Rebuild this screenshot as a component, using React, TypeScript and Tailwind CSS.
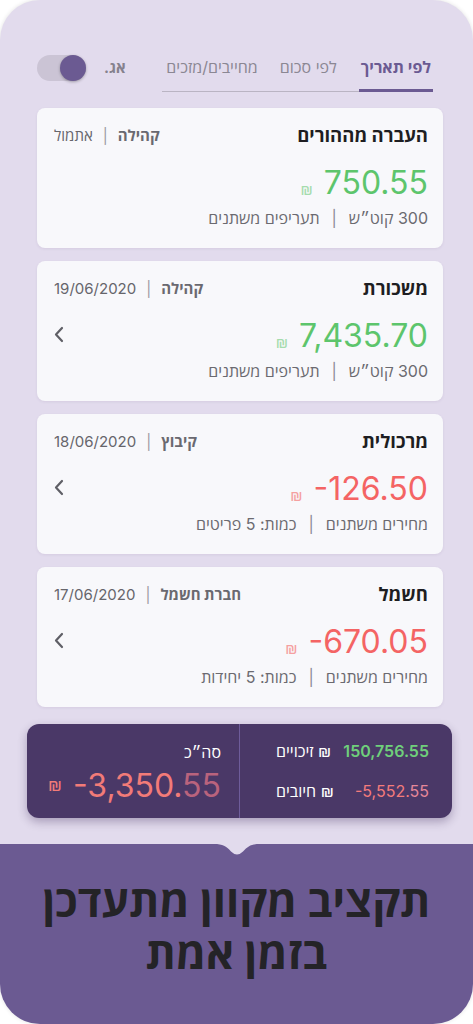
const font = { fontFamily: "Inter, 'Open Sans', 'Liberation Sans', 'DejaVu Sans', sans-serif" }

interface CardProps {
  title: string
  place: string
  when: string
  amount: string
  negative?: boolean
  note: [string, string]
  chevron?: boolean
}

function Chevron() {
  return (
    <svg width="10" height="17" viewBox="0 0 10 17" fill="none" className="mb-1">
      <path d="M8 2L2 8.5L8 15" stroke="#5f5f66" strokeWidth="2.2" strokeLinecap="round" strokeLinejoin="round" />
    </svg>
  )
}

function Card({ title, place, when, amount, negative, note, chevron }: CardProps) {
  return (
    <div className="h-[140px] rounded-lg bg-[#f8f8fb] pr-[15px] pl-[17px] pt-[17px] pb-[19px] shadow-[0_1px_3px_rgba(60,40,90,0.08)]">
      <div className="flex h-[22px] items-center justify-between">
        <div className="text-[18.5px] font-bold text-[#1e1e22]">{title}</div>
        <div className="flex items-center gap-[10px] text-[15px] text-[#66656b]">
          <span className="font-bold text-[#6a6970]">{place}</span>
          <span className="text-[#9c9aa2]">|</span>
          <span dir="ltr">{when}</span>
        </div>
      </div>
      <div className="mt-[17px] flex h-[38px] items-center justify-between">
        <div className="flex items-end gap-[11px]">
          <span dir="ltr" className={`text-[32px] leading-[38px] ${negative ? 'text-[#f46464]' : 'text-[#5dc56c]'}`}>
            {amount}
          </span>
          <span className={`mb-[5px] text-[15px] leading-none ${negative ? 'text-[#f5a0a0]' : 'text-[#a5dcad]'}`}>₪</span>
        </div>
        {chevron && <Chevron />}
      </div>
      <div className="mt-[5px] flex h-[22px] items-center gap-3 text-[16px] text-[#6b6a70]">
        <span>{note[0]}</span>
        <span className="text-[#8d8b93]">|</span>
        <span>{note[1]}</span>
      </div>
    </div>
  )
}

export default function App() {
  return (
    <div dir="rtl" className="min-h-[1024px] bg-white" style={font}>
      <div className="relative flex h-[1024px] flex-col rounded-[40px] bg-[#e2dbed] shadow-[0_0_4px_rgba(0,0,0,0.12)]">
        {/* tabs */}
        <div className="flex items-end pr-[40px] pl-[37px] pt-[55px]">
          <div className="flex items-end gap-[22px] border-b border-[#bab4c3] pl-[4px]">
            <div className="-mb-px border-b-[3px] border-[#6b5a92] px-[2px] pb-[10px] text-[16px] font-bold text-[#6b5a92]">לפי תאריך</div>
            <div className="pb-[12px] text-[16px] text-[#8b8793]">לפי סכום</div>
            <div className="pb-[12px] text-[16px] text-[#8b8793]">מחייבים/מזכים</div>
          </div>
          <div className="mr-auto flex items-center gap-[18px] self-start">
            <span className="text-[15px] font-bold text-[#85818d]">אג.</span>
            <div dir="ltr" className="flex h-[26px] w-[49px] justify-end rounded-full bg-[#cbc4d5]">
              <div className="h-[26px] w-[26px] rounded-full bg-[#6b5a92] shadow-[0_1px_3px_rgba(0,0,0,0.3)]" />
            </div>
          </div>
        </div>

        {/* cards */}
        <div className="mt-[16px] ml-[37px] mr-[30px] flex flex-col gap-[13px]">
          <Card title="העברה מההורים" place="קהילה" when="אתמול" amount="750.55" note={['300 קוט״ש', 'תעריפים משתנים']} />
          <Card title="משכורת" place="קהילה" when="19/06/2020" amount="7,435.70" note={['300 קוט״ש', 'תעריפים משתנים']} chevron />
          <Card title="מרכולית" place="קיבוץ" when="18/06/2020" amount="-126.50" negative note={['מחירים משתנים', 'כמות: 5 פריטים']} chevron />
          <Card title="חשמל" place="חברת חשמל" when="17/06/2020" amount="-670.05" negative note={['מחירים משתנים', 'כמות: 5 יחידות']} chevron />
        </div>

        {/* summary */}
        <div className="mt-[17px] ml-[27px] mr-[21px] flex h-[94px] rounded-[12px] bg-[#4a3867] shadow-[0_4px_10px_rgba(40,20,70,0.3)]">
          <div className="flex w-[213px] flex-col justify-center gap-[16px] border-l border-[#6e5c9a] pr-[23px] pl-[36px] text-[16px]">
            <div className="flex items-center justify-between">
              <span dir="ltr" className="font-semibold text-[#6fcf7b]">150,756.55</span>
              <span className="text-white">₪ זיכויים</span>
            </div>
            <div className="flex items-center justify-between">
              <span dir="ltr" className="text-[#f47b7b]">
                -5,552.<span className="text-[#e5889a]">55</span>
              </span>
              <span className="text-white">₪ חיובים</span>
            </div>
          </div>
          <div className="flex flex-1 flex-col pr-[18px] pt-[16px]">
            <div className="text-[16px] text-white">סה״כ</div>
            <div className="mt-[3px] flex items-center gap-[11px]">
              <span dir="ltr" className="text-[32px] leading-[38px] text-[#f27b78]">
                -3,350.<span className="text-[#b9637d]">55</span>
              </span>
              <span className="text-[17px] text-[#f27b78]">₪</span>
            </div>
          </div>
        </div>

        {/* bottom banner */}
        <div className="relative mt-[26px] flex flex-1 flex-col items-center rounded-b-[40px] bg-[#6b5a92] pt-[31px] text-center">
          <svg width="46" height="13" viewBox="0 0 46 13" className="absolute top-0 left-1/2 -translate-x-1/2">
            <path d="M0 0 C9 0 12 2 17 7.5 Q23 13.5 29 7.5 C34 2 37 0 46 0 Z" fill="#e2dbed" />
          </svg>
          <div className="text-[43.5px] font-bold leading-[52px] text-[#242327]">תקציב מקוון מתעדכן</div>
          <div className="text-[43.5px] font-bold leading-[52px] text-[#242327]">בזמן אמת</div>
        </div>
      </div>
    </div>
  )
}
